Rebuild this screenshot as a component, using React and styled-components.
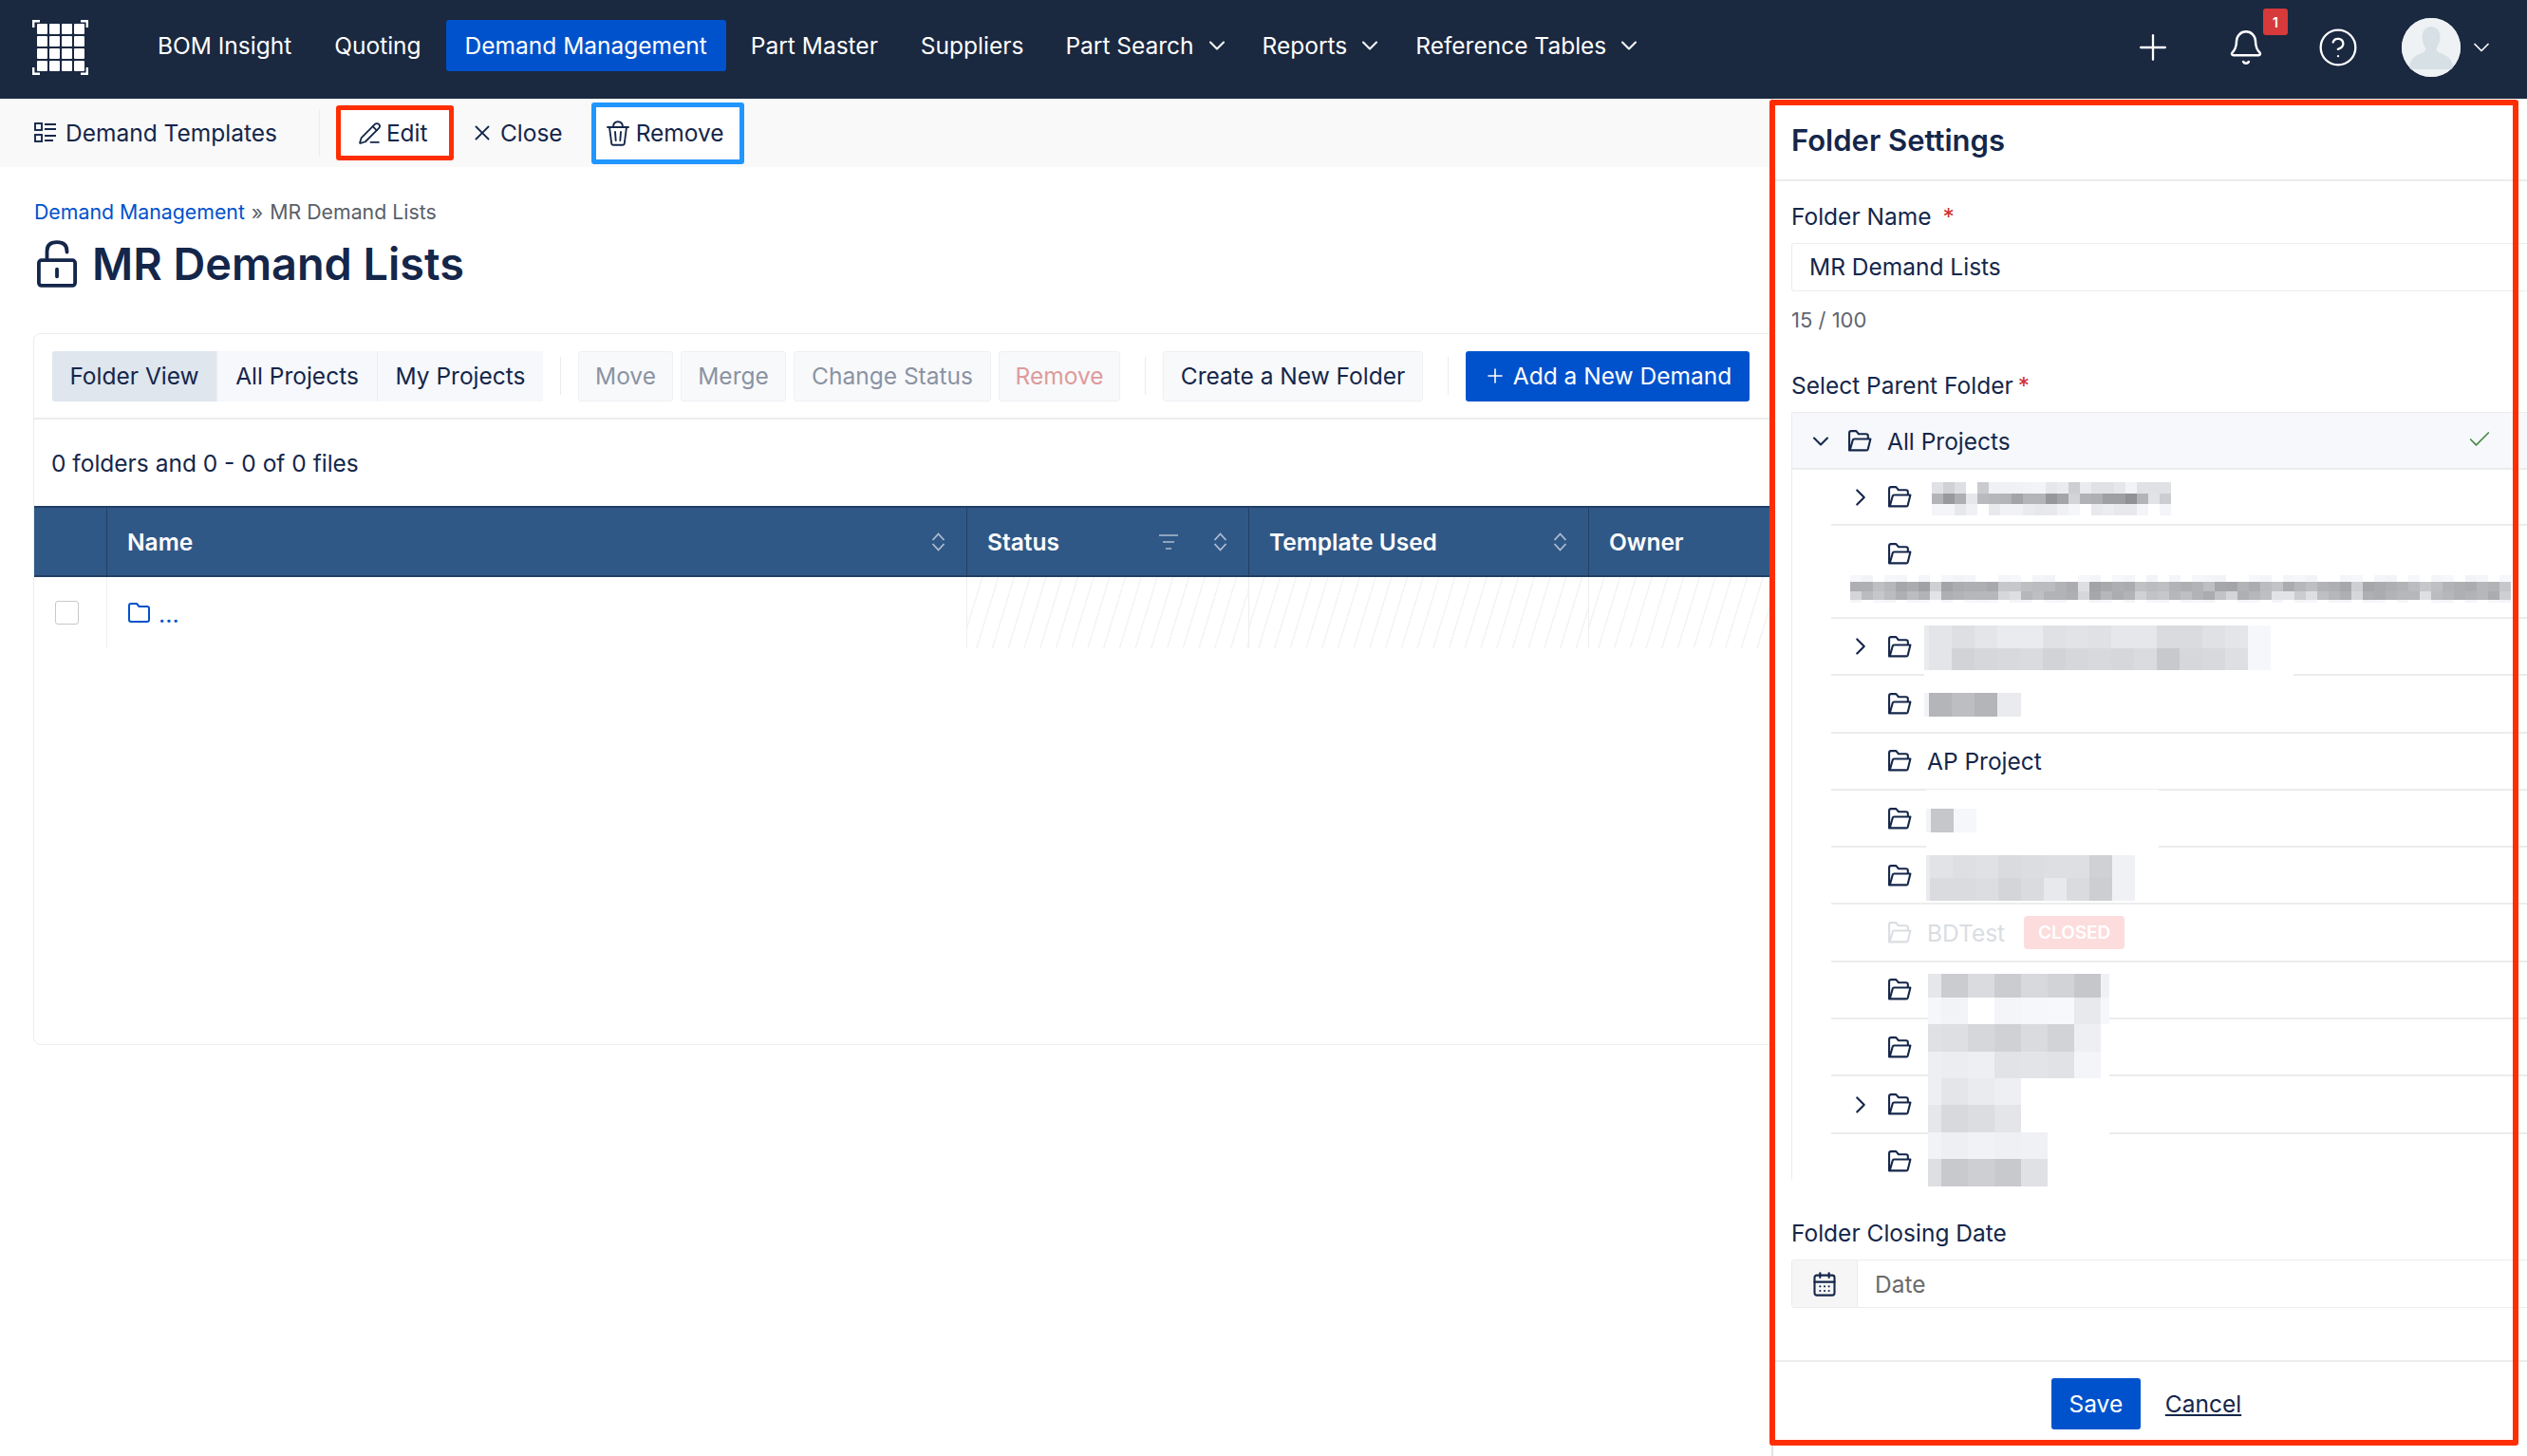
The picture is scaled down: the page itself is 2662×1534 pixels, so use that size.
import React from "react";
import styled, { createGlobalStyle } from "styled-components";
import { Plus, Bell, CircleHelp, ChevronDown, ChevronRight, X, Check, PencilLine, CalendarDays } from "lucide-react";

const INK = "#14264a";
const BLUE = "#0052cc";

const Global = createGlobalStyle`
  html, body { margin: 0; padding: 0; background: #fff; }
  body { font-family: Inter, "Noto Sans", sans-serif; color: ${INK}; font-size: 24.5px; }
  * { box-sizing: border-box; }
`;

const Page = styled.div`
  position: relative;
  width: 2662px;
  height: 1534px;
  overflow: hidden;
  display: flex;
  flex-direction: column;
`;

const TopBar = styled.header`
  height: 104px;
  flex: none;
  background: #1a2840;
  display: flex;
  align-items: center;
  padding: 0 34px 0 34px;
  color: #fff;
`;
const LogoBox = styled.div`
  width: 59px;
  height: 58px;
  margin-right: 73px;
  margin-top: -4px;
  display: flex;
`;
const NavList = styled.nav`
  display: flex;
  align-items: center;
  flex: 1;
  margin-top: -8px;
`;
const NavItem = styled.a`
  display: flex;
  align-items: center;
  height: 54px;
  padding: 0 ${(p) => p.$pad ?? 0}px;
  margin-right: ${(p) => p.$gap}px;
  border-radius: 3px;
  background: ${(p) => (p.$active ? BLUE : "transparent")};
  font-size: 24.5px;
  white-space: nowrap;
  svg { margin-left: 10px; }
`;
const TopIcons = styled.div`
  display: flex;
  align-items: center;
  position: relative;
  margin-top: -4px;
`;
const IconSlot = styled.div`
  position: relative;
  display: flex;
  margin-right: ${(p) => p.$gap}px;
  margin-left: ${(p) => p.$left ?? 0}px;
`;
const Badge = styled.span`
  position: absolute;
  left: 38px;
  top: -21px;
  width: 26px;
  height: 28px;
  border-radius: 3px;
  background: #d63a3a;
  color: #fff;
  font-size: 14px;
  font-weight: 600;
  display: flex;
  align-items: center;
  justify-content: center;
`;
const Avatar = styled.div`
  width: 62px;
  height: 62px;
  border-radius: 50%;
  overflow: hidden;
  background: #eef2f4;
  display: flex;
`;

const SubBar = styled.div`
  height: 72px;
  flex: none;
  background: #f9f9f9;
  display: flex;
  align-items: center;
  padding-left: 36px;
  font-size: 24.5px;
`;
const SubItem = styled.div`
  display: flex;
  align-items: center;
  gap: ${(p) => p.$gap ?? 8}px;
  white-space: nowrap;
  margin-right: ${(p) => p.$mr ?? 0}px;
`;
const SubDivider = styled.span`
  width: 1px;
  height: 50px;
  background: #ececec;
  margin: 0 17px 0 44px;
`;
const MarkedItem = styled.div`
  display: flex;
  align-items: center;
  gap: ${(p) => p.$gap}px;
  width: ${(p) => p.$w}px;
  height: ${(p) => p.$h}px;
  padding-left: ${(p) => p.$pad}px;
  background: #fff;
  border: ${(p) => p.$bw}px solid ${(p) => p.$color};
  border-radius: 3px;
  margin-right: ${(p) => p.$mr ?? 0}px;
`;

const Main = styled.main`
  flex: 1;
  padding: 0 0 0 35px;
  min-width: 0;
`;
const Crumbs = styled.div`
  height: 34px;
  margin-top: 30px;
  display: flex;
  align-items: center;
  font-size: 21.3px;
  color: #5a5f68;
  padding-left: 1px;
  a { color: ${BLUE}; margin-right: 7px; }
  span { margin-right: 7px; }
`;
const TitleRow = styled.div`
  display: flex;
  align-items: center;
  gap: 16px;
  margin-top: 8px;
  padding-left: 4px;
  height: 60px;
`;
const Title = styled.h1`
  margin: 0;
  font-size: 46.8px;
  font-weight: 600;
  color: ${INK};
  white-space: nowrap;
`;
const Card = styled.section`
  margin-top: 43px;
  height: 750px;
  width: 2000px;
  border: 1px solid #ececec;
  border-radius: 8px;
  overflow: hidden;
`;
const ActionBar = styled.div`
  height: 90px;
  border-bottom: 2px solid #ececec;
  display: flex;
  align-items: center;
  padding: 0 19px;
`;
const Segments = styled.div`
  display: flex;
  border-radius: 3px;
  box-shadow: 0 0 0 1px #e8eaee inset;
  overflow: hidden;
`;
const Segment = styled.div`
  height: 53px;
  width: ${(p) => p.$w}px;
  display: flex;
  align-items: center;
  justify-content: center;
  background: ${(p) => (p.$active ? "#dfe6ee" : "#f6f8fb")};
  border-left: ${(p) => (p.$first ? "none" : p.$active ? "none" : "1px solid #eceef2")};
  font-size: 24.5px;
  white-space: nowrap;
`;
const BarSep = styled.span`
  width: 1px;
  height: 40px;
  background: #ececec;
  margin: 0 18px;
`;
const GhostBtn = styled.div`
  height: 53px;
  width: ${(p) => p.$w}px;
  display: flex;
  align-items: center;
  justify-content: center;
  background: #f8f9fb;
  border: 1px solid #eff0f3;
  border-radius: 3px;
  margin-right: 8px;
  color: ${(p) => (p.$danger ? "#dd9b9b" : p.$strong ? INK : "#8b93a3")};
  font-size: 24.5px;
  white-space: nowrap;
`;
const PrimaryBtn = styled.div`
  height: 53px;
  width: 299px;
  display: flex;
  align-items: center;
  justify-content: center;
  gap: 7px;
  background: ${BLUE};
  color: #fff;
  border-radius: 3px;
  font-size: 24.5px;
  white-space: nowrap;
`;
const CountRow = styled.div`
  height: 91px;
  display: flex;
  align-items: center;
  padding-left: 18px;
  font-size: 24.5px;
`;
const TableHead = styled.div`
  display: grid;
  grid-template-columns: 76px 906px 297px 358px 1fr;
  height: 75px;
  background: #305887;
  border-top: 2px solid #213f66;
  border-bottom: 2px solid #213f66;
  color: #fff;
`;
const HeadCell = styled.div`
  display: flex;
  align-items: center;
  padding: 0 22px 0 21px;
  border-left: ${(p) => (p.$first ? "none" : "1px solid #233f64")};
  font-size: 24.5px;
  font-weight: 600;
  gap: 37px;
  b { flex: 1; font-weight: 600; }
`;
const TableRow = styled.div`
  display: grid;
  grid-template-columns: 76px 906px 297px 358px 1fr;
  height: 75px;
`;
const BodyCell = styled.div`
  display: flex;
  align-items: center;
  padding-left: 22px;
  border-left: ${(p) => (p.$first ? "none" : "1px solid #efefef")};
  color: ${BLUE};
  gap: 9px;
  background: ${(p) =>
    p.$hatched
      ? "repeating-linear-gradient(107deg, #fff 0, #fff 14.5px, #f4f4f4 14.5px, #f4f4f4 16px)"
      : "#fff"};
`;
const CheckBox = styled.span`
  width: 25px;
  height: 25px;
  border: 1.5px solid #c9c9c9;
  border-radius: 3px;
  background: #fff;
`;
const Dots = styled.span`
  font-size: 25px;
  line-height: 1;
  margin-top: 4px;
`;

const Drawer = styled.aside`
  position: absolute;
  top: 104px;
  right: 0;
  bottom: 0;
  width: 796px;
  background: #fff;
  border-left: 2px solid #e4e4e4;
  display: flex;
  flex-direction: column;
`;
const MarkFrame = styled.div`
  position: absolute;
  left: -4px;
  top: 1px;
  right: 9px;
  bottom: 11px;
  border: 6px solid #ff2e00;
  border-radius: 3px;
  pointer-events: none;
  z-index: 3;
`;
const DrawerHead = styled.div`
  height: 87px;
  flex: none;
  border-bottom: 2px solid #ececec;
  padding: 2px 0 0 19px;
  display: flex;
  align-items: center;
  font-size: 31px;
  font-weight: 600;
  color: ${INK};
`;
const DrawerBody = styled.div`
  flex: 1;
  padding: 20px 0 0 19px;
  min-height: 0;
`;
const FieldLabel = styled.label`
  display: flex;
  align-items: center;
  height: 34px;
  margin: ${(p) => p.$top ?? 0}px 0 11px;
  font-size: 24.5px;
  color: ${INK};
  i { color: #d12f2f; font-style: normal; margin-left: ${(p) => p.$starGap ?? 8}px; }
`;
const TextInput = styled.div`
  height: 51px;
  border: 1px solid #ececec;
  border-right: none;
  border-radius: 3px 0 0 3px;
  display: flex;
  align-items: center;
  padding: 0 0 1px 18px;
  font-size: 24.5px;
`;
const Counter = styled.div`
  height: 30px;
  margin-top: 15px;
  font-size: 22px;
  color: #60656e;
  display: flex;
  align-items: center;
`;
const TreeBox = styled.div`
  height: 809px;
  border-left: 1px solid #ececec;
  overflow: hidden;
  position: relative;
`;
const TreeRoot = styled.div`
  height: 61px;
  background: #f6f8fb;
  border-top: 1px solid #ececec;
  border-bottom: 2px solid #ececec;
  display: flex;
  align-items: center;
  padding: 1px 0 0 16px;
  font-size: 24.5px;
  svg { flex: none; }
`;
const RootGap = styled.span`
  width: 14px;
  flex: none;
`;
const RootName = styled.span`
  margin-left: 16px;
  flex: 1;
`;
const TreeItem = styled.div`
  margin-left: 41px;
  height: ${(p) => p.$h ?? 60.3}px;
  border-bottom: 2px solid #ececec;
  display: flex;
  align-items: ${(p) => (p.$top ? "flex-start" : "center")};
  padding-top: ${(p) => (p.$top ? 18 : 0)}px;
  padding-left: 16px;
  font-size: 24.5px;
  color: ${(p) => (p.$faded ? "#dadde2" : INK)};
`;
const Caret = styled.span`
  width: 43px;
  flex: none;
  display: flex;
`;
const ItemName = styled.span`
  margin-left: 16px;
  white-space: nowrap;
`;
const ClosedTag = styled.span`
  margin-left: 20px;
  width: 106px;
  height: 35px;
  border-radius: 4px;
  background: #fcdcdc;
  color: #fff;
  font-size: 19px;
  font-weight: 600;
  display: flex;
  align-items: center;
  justify-content: center;
`;
const MosaicLayer = styled.svg`
  position: absolute;
  left: 19px;
  top: 330px;
  width: 775px;
  height: 830px;
  z-index: 2;
  pointer-events: none;
`;
const DateGroup = styled.div`
  display: flex;
  height: 51px;
`;
const DateAddon = styled.div`
  width: 70px;
  background: #f6f6f6;
  border: 1px solid #ececec;
  border-radius: 3px 0 0 3px;
  display: flex;
  align-items: center;
  justify-content: center;
`;
const DateInput = styled.div`
  flex: 1;
  border-top: 1px solid #ececec;
  border-bottom: 1px solid #ececec;
  padding-left: 18px;
  display: flex;
  align-items: center;
  color: #6b6b6b;
  font-size: 24.5px;
`;
const DrawerFoot = styled.div`
  height: 101px;
  flex: none;
  border-top: 2px solid #ececec;
  display: flex;
  align-items: flex-start;
  justify-content: center;
  gap: 26px;
  padding: 17px 8px 0 0;
`;
const SaveBtn = styled.div`
  width: 94px;
  height: 54px;
  background: ${BLUE};
  color: #fff;
  border-radius: 3px;
  display: flex;
  align-items: center;
  justify-content: center;
  font-size: 24.5px;
`;
const CancelLink = styled.a`
  height: 54px;
  display: flex;
  align-items: center;
  font-size: 24.5px;
  text-decoration: underline;
  color: ${INK};
`;

const Logo = () => (
  <svg width="59" height="58" viewBox="0 0 59 58">
    {[5, 18, 31, 44].flatMap((x) =>
      [4, 17, 30, 43].map((y) => <rect key={`${x}-${y}`} x={x} y={y} width="11" height="11" rx="1" fill="#fff" />)
    )}
    <path d="M8 1.2H1.2V8M51 1.2H57.8V8M8 56.8H1.2V50M51 56.8H57.8V50" fill="none" stroke="#fff" strokeWidth="2.4" />
  </svg>
);
const FolderOpenIcon = ({ color = INK }) => (
  <svg width="26" height="23" viewBox="0 0 25 22" fill="none" stroke={color} strokeWidth="2" strokeLinejoin="round" strokeLinecap="round" style={{ flex: "none" }}>
    <path d="M2 20V3a2 2 0 0 1 2-2h5l2.5 3H19a2 2 0 0 1 2 2v2.5" />
    <path d="M2 20.5h17.5a1.5 1.5 0 0 0 1.4-1l2.6-10.5H7a1.5 1.5 0 0 0-1.4 1L2.6 20.5" />
  </svg>
);
const BlueFolder = () => (
  <svg width="23" height="21" viewBox="0 0 23 21" fill="none" stroke={BLUE} strokeWidth="2" strokeLinejoin="round">
    <path d="M1 3a2 2 0 0 1 2-2h6l2.5 3H20a2 2 0 0 1 2 2v12a2 2 0 0 1-2 2H3a2 2 0 0 1-2-2Z" />
  </svg>
);
const ListIcon = () => (
  <svg width="24" height="22" viewBox="0 0 24 22" fill="none" stroke={INK} strokeWidth="1.9">
    <rect x="1" y="1" width="7" height="7" />
    <rect x="1" y="13" width="7" height="7" />
    <path d="M11 2h12M11 7h12M11 14h12M11 19h9" />
  </svg>
);
const TrashIcon = () => (
  <svg width="24" height="27" viewBox="0 0 24 27" fill="none" stroke={INK} strokeWidth="1.9" strokeLinejoin="round" strokeLinecap="round">
    <path d="M1 7h22M3 7l2.2 17a2 2 0 0 0 2 1.8h9.6a2 2 0 0 0 2-1.8L21 7" />
    <path d="M7 7C7 3.5 9 1.2 12 1.2S17 3.5 17 7" />
    <path d="M9 12l.7 9M15 12l-.7 9" />
  </svg>
);
const LockIcon = () => (
  <svg width="42" height="50" viewBox="0 0 44 52" fill="none" stroke={INK} strokeWidth="4" strokeLinejoin="round" strokeLinecap="round">
    <rect x="2" y="22" width="40" height="28" rx="3" />
    <path d="M11 20V12C11 5.5 15 2 22 2s11 3.500 11 10v1" />
    <path d="M22 32v8" />
  </svg>
);
const SortIcon = () => (
  <svg width="15" height="20" viewBox="0 0 15 20" fill="none" stroke="#aebdd0" strokeWidth="1.8" style={{ flex: "none" }}>
    <path d="M1.500 8L7.500 1.500L13.500 8M1.500 12L7.500 18.500L13.500 12" />
  </svg>
);
const FilterIcon = () => (
  <svg width="20" height="18" viewBox="0 0 20 18" fill="none" stroke="#8fa3bc" strokeWidth="2" style={{ flex: "none" }}>
    <path d="M0 2h20M4 9h12M7 16h6" />
  </svg>
);
const AvatarArt = () => (
  <svg width="62" height="62" viewBox="0 0 62 62">
    <rect width="62" height="62" fill="#eef2f4" />
    <path d="M31 9c6 0 9.500 5 9.500 11 0 5-2 9-3.500 11.500-1 2 .5 4 3 5 6 2.500 13 5 14 15V54H8v-2.500c1-10 8-12.500 14-15 2.500-1 4-3 3-5C23.500 29 21.500 25 21.500 20 21.500 14 25 9 31 9Z" fill="#d7e0e5" />
  </svg>
);

const shade = (h, lift = 0) => {
  const v = Math.min(parseInt(h, 16) + lift, 255);
  if (v >= 0xfa) return "#fff";
  return `rgb(${v - 2},${v - 1},${Math.min(v + 3, 255)})`;
};
const mosaics = [
  { x: 2035, ys: [508, 520, 531, 543], cols: Array(21).fill(12), rows: [
    "e2 d2 e0 fb cc f2 f2 f2 f4 f5 e8 ec cf ec e2 e2 e8 f4 e2 e2 e2",
    "b5 9a b0 e8 bb b8 b5 a5 b5 b5 98 a6 d5 b3 b0 a0 a0 92 b5 e4 ce",
    "f6 f6 e9 f2 ff ea f3 f3 ec e9 ea f2 f7 ff ea ee ea ea f6 ff f6",
  ] },
  { x: 1949, lift: 8, ys: [606, 613, 623, 632, 635], cols: Array(58).fill(12), rows: [
    "f0 ec f4 f0 ee f2 ee f6 f0 ec ee f2 f6 ee f0 f4 ee ec f2 f6 f0 ee f4 f0 ee f2 ec f6 ee f4 f0 ee ec f2 f6 f0 ee f4 ee f0 ec f6 f2 ee f0 f4 ee ec f2 f0 f6 ee f0 f4 ec ee f2 f0",
    "a8 a8 b8 b0 a0 a5 9a c8 9d a5 a8 a8 a2 c0 c0 b8 b5 b5 ac a5 d8 9c a2 a8 a5 ba b5 b8 ac a8 ac b8 a0 9e ac a5 b5 bc a5 b0 b8 ac a8 a0 c8 a0 a4 a8 ac b5 c0 b8 ac a8 a5 b0 ac c0",
    "ce b5 c0 b5 a8 b5 ac dc a8 ac b0 b0 b0 d0 d8 b0 b8 ac ac a8 d0 a0 b0 a5 ac ca bc c0 b0 b8 ac a5 bc ce a8 b0 b8 dc dc c5 d8 b8 b0 a8 d0 a8 a5 ac b0 b0 d8 b5 b0 a8 ac b0 a5 c8",
    "ee f2 f0 ee f4 ee f0 f6 ee f2 f0 ee f0 f4 ee ee f2 f0 ee f4 f6 ee f0 f2 ee f4 f0 ee f2 ee f0 ee f4 f6 ee f0 f2 ee f4 ee f0 f2 ee ee f4 ee f0 f2 ee f4 f6 f0 ee f2 ee f4 f0 ee",
  ] },
  { x: 2027, ys: [659, 683, 706, 730], cols: [5, 24, 24, 24, 24, 24, 24, 24, 24, 24, 24, 24, 24, 24, 24, 24, 24], rows: [
    "ec e6 e0 e6 ec ec e2 e4 e2 e8 e8 dc dc e2 e6 f8 ff",
    "ec e6 d4 d8 da dc d4 d8 da d8 dc ca d8 da e0 f8 ff",
    "ff ff fb ff ff ff ff ff ff ff ff ff ff ff ff ff ff",
  ] },
  { x: 2027, ys: [730, 755], cols: [5, 24, 24, 24, 25], rows: ["f4 b6 bf b6 ec"] },
  { x: 2029, ys: [832, 852, 877, 895], cols: [5, 24, 24, 24, 48, 120], rows: [
    "ff ff ff ff ff ff",
    "f4 c8 f8 ff fb ff",
    "ff ff ff ff ff ff",
  ] },
  { x: 2029, ys: [901, 925, 949], cols: [4, 24, 24, 24, 24, 24, 24, 24, 24, 24], rows: [
    "ec e4 e0 e2 dc de e0 e0 d2 f2",
    "ec dc dc de d6 dc ea dc cf f2",
  ] },
  { x: 2031, ys: [1026, 1051, 1079, 1108, 1136, 1164, 1193, 1221, 1250], cols: [14, 28, 28, 28, 28, 28, 28, 9], rows: [
    "e8 cd dc cd da d4 c8 f2",
    "f8 f4 fb f6 f8 f9 ea f8",
    "e2 e0 d8 d2 dc d4 f0 ff",
    "f0 ee f0 e4 e5 e3 f6 ff",
    "f0 e6 ec f0 ff ff ff ff",
    "e8 da de e6 ff ff ff ff",
    "f4 f0 f3 f1 f2 ff ff ff",
    "e0 ca d0 ca e2 ff ff ff",
  ] },
];
const Mosaic = () => (
  <MosaicLayer viewBox="1887 434 775 830" shapeRendering="crispEdges">
    {mosaics.flatMap((m, mi) =>
      m.rows.flatMap((r, ri) => {
        let x = m.x;
        return r.split(" ").map((h, ci) => {
          const w = m.cols[ci];
          const el = <rect key={`${mi}-${ri}-${ci}`} x={x} y={m.ys[ri]} width={w} height={m.ys[ri + 1] - m.ys[ri]} fill={shade(h, m.lift)} />;
          x += w;
          return el;
        });
      })
    )}
  </MosaicLayer>
);

const rows = [
  { caret: true, h: 59 },
  { h: 98, top: true },
  { caret: true },
  {},
  { name: "AP Project" },
  {},
  {},
  { name: "BDTest", closed: true },
  {},
  {},
  { caret: true },
  {},
];

export default function App() {
  return (
    <Page>
      <Global />
      <TopBar>
        <LogoBox><Logo /></LogoBox>
        <NavList>
          <NavItem $gap={45}>BOM Insight</NavItem>
          <NavItem $gap={26}>Quoting</NavItem>
          <NavItem $active $pad={20} $gap={26}>Demand Management</NavItem>
          <NavItem $gap={45}>Part Master</NavItem>
          <NavItem $gap={44}>Suppliers</NavItem>
          <NavItem $gap={34}>Part Search<ChevronDown size={28} strokeWidth={1.8} /></NavItem>
          <NavItem $gap={34}>Reports<ChevronDown size={28} strokeWidth={1.8} /></NavItem>
          <NavItem $gap={0}>Reference Tables<ChevronDown size={28} strokeWidth={1.8} /></NavItem>
        </NavList>
        <TopIcons>
          <IconSlot $gap={56}><Plus size={44} strokeWidth={1.25} color="#fff" /></IconSlot>
          <IconSlot $gap={55}>
            <Bell size={40} strokeWidth={1.5} color="#fff" />
            <Badge>1</Badge>
          </IconSlot>
          <IconSlot $gap={45}><CircleHelp size={44} strokeWidth={1.25} color="#fff" /></IconSlot>
          <Avatar><AvatarArt /></Avatar>
          <IconSlot $gap={0} $left={8}>
            <ChevronDown size={28} strokeWidth={1.5} color="#fff" />
          </IconSlot>
        </TopIcons>
      </TopBar>

      <SubBar>
        <SubItem $gap={9}><ListIcon />Demand Templates</SubItem>
        <SubDivider />
        <MarkedItem $w={124} $h={58} $bw={5} $color="#ff2e00" $gap={5} $mr={17} $pad={18}>
          <PencilLine size={25} strokeWidth={1.7} color={INK} />Edit
        </MarkedItem>
        <SubItem $gap={6} $mr={30}><X size={26} strokeWidth={1.7} color={INK} />Close</SubItem>
        <MarkedItem $w={161} $h={65} $bw={5} $color="#2196ff" $gap={7} $pad={11}>
          <TrashIcon />Remove
        </MarkedItem>
      </SubBar>

      <Main>
        <Crumbs><a>Demand Management</a><span>»</span>MR Demand Lists</Crumbs>
        <TitleRow><LockIcon /><Title>MR Demand Lists</Title></TitleRow>
        <Card>
          <ActionBar>
            <Segments>
              <Segment $active $first $w={173}>Folder View</Segment>
              <Segment $w={169}>All Projects</Segment>
              <Segment $w={175}>My Projects</Segment>
            </Segments>
            <BarSep />
            <GhostBtn $w={100}>Move</GhostBtn>
            <GhostBtn $w={111}>Merge</GhostBtn>
            <GhostBtn $w={208}>Change Status</GhostBtn>
            <GhostBtn $danger $w={128}>Remove</GhostBtn>
            <BarSep />
            <GhostBtn $strong $w={274}>Create a New Folder</GhostBtn>
            <BarSep />
            <PrimaryBtn><Plus size={24} strokeWidth={1.6} />Add a New Demand</PrimaryBtn>
          </ActionBar>
          <CountRow>0 folders and 0 - 0 of 0 files</CountRow>
          <TableHead>
            <HeadCell $first />
            <HeadCell><b>Name</b><SortIcon /></HeadCell>
            <HeadCell><b>Status</b><FilterIcon /><SortIcon /></HeadCell>
            <HeadCell><b>Template Used</b><SortIcon /></HeadCell>
            <HeadCell><b>Owner</b></HeadCell>
          </TableHead>
          <TableRow>
            <BodyCell $first><CheckBox /></BodyCell>
            <BodyCell><BlueFolder /><Dots>...</Dots></BodyCell>
            <BodyCell $hatched />
            <BodyCell $hatched />
            <BodyCell $hatched />
          </TableRow>
        </Card>
      </Main>

      <Drawer>
        <DrawerHead>Folder Settings</DrawerHead>
        <DrawerBody>
          <FieldLabel $starGap={12}>Folder Name<i>*</i></FieldLabel>
          <TextInput>MR Demand Lists</TextInput>
          <Counter>15 / 100</Counter>
          <FieldLabel $top={37} $starGap={5}>Select Parent Folder<i>*</i></FieldLabel>
          <TreeBox>
            <TreeRoot>
              <ChevronDown size={28} strokeWidth={1.8} color={INK} />
              <RootGap />
              <FolderOpenIcon />
              <RootName>All Projects</RootName>
              <Check size={28} strokeWidth={1.5} color="#4a8a4a" style={{ marginRight: 36, marginTop: -4 }} />
            </TreeRoot>
            {rows.map((r, i) => (
              <TreeItem key={i} $h={r.h} $top={r.top} $faded={r.closed}>
                <Caret>{r.caret && <ChevronRight size={30} strokeWidth={1.7} color={INK} />}</Caret>
                <FolderOpenIcon color={r.closed ? "#dadde2" : INK} />
                {r.name && <ItemName>{r.name}</ItemName>}
                {r.closed && <ClosedTag>CLOSED</ClosedTag>}
              </TreeItem>
            ))}
          </TreeBox>
          <FieldLabel $top={39}>Folder Closing Date</FieldLabel>
          <DateGroup>
            <DateAddon><CalendarDays size={28} strokeWidth={1.8} color={INK} /></DateAddon>
            <DateInput>Date</DateInput>
          </DateGroup>
        </DrawerBody>
        <DrawerFoot>
          <SaveBtn>Save</SaveBtn>
          <CancelLink>Cancel</CancelLink>
        </DrawerFoot>
        <MarkFrame />
        <Mosaic />
      </Drawer>
    </Page>
  );
}
